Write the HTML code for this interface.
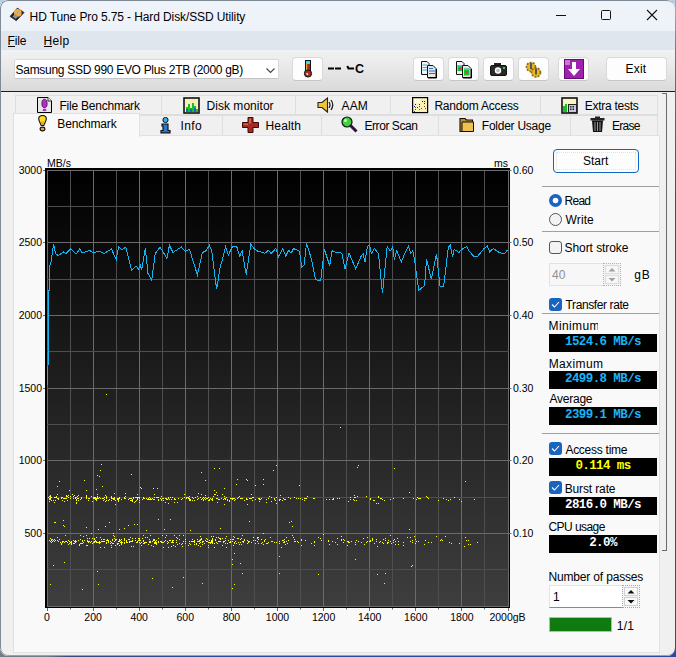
<!DOCTYPE html>
<html><head><meta charset="utf-8">
<style>
html,body{margin:0;padding:0;}
body{width:676px;height:657px;position:relative;overflow:hidden;background:#2d4b9c;z-index:0;font-family:"Liberation Sans",sans-serif;color:#000;}
.win{position:absolute;left:0;top:0;width:675px;height:656px;background:#f0f0f0;border-radius:8px;overflow:hidden;}
.abs{position:absolute;}
.t{position:absolute;white-space:nowrap;line-height:1;font-size:12px;}
.titlebar{position:absolute;left:0;top:0;width:675px;height:31px;background:#eef3fa;}
.menubar{position:absolute;left:0;top:31px;width:675px;height:19px;background:#dfe6ee;}
.toolbar{position:absolute;left:0;top:50px;width:675px;height:41px;background:linear-gradient(#f2f2f2,#e9e9e9 40%,#dadada);}
.blackline{position:absolute;left:0;top:91px;width:675px;height:1px;background:#1c1c1c;}
.btn{position:absolute;background:#fdfdfd;border:1px solid #d9d9d9;border-bottom-color:#c6c6c6;border-radius:4px;box-sizing:border-box;}
.tab{position:absolute;background:#f0f0f0;border:1px solid #dedede;box-sizing:border-box;}
.panel{position:absolute;left:13px;top:135px;width:647px;height:518px;background:#f9f9f9;border:1px solid #e1e1e1;box-sizing:border-box;}
.sep{position:absolute;left:542px;width:117px;height:1px;background:#a0a0a0;}
.lcd{position:absolute;left:549px;width:108px;height:18px;background:#000;font-family:"Liberation Mono",monospace;font-weight:bold;font-size:12.5px;line-height:17px;text-align:center;letter-spacing:-0.6px;}
.chk{position:absolute;left:549px;width:13px;height:13px;box-sizing:border-box;border-radius:3px;background:#1a64c1;}
svg{position:absolute;left:0;top:0;}
.chart{pointer-events:none;}
</style></head><body>
<div class="win">
  <!-- window borders -->
  <div class="titlebar"></div>
  <div class="menubar"></div>
  <div class="toolbar"></div>
  <div class="blackline"></div>

  <!-- title -->
  <svg width="30" height="30" style="left:0;top:0">
    <path d="M10 16.4 L17.4 8.1 L24.1 12.5 L16.3 20.7 Z" fill="#1e1e1e" stroke="#333" stroke-width="0.8"/>
    <circle cx="17.8" cy="12.8" r="3.9" fill="#f2a93a"/>
    <circle cx="17.6" cy="12.6" r="1.2" fill="#9ab0c8"/>
    <path d="M12.5 16.5 L15 14 L18 16.5 L15.8 19 Z" fill="#8d949a"/>
  </svg>
  <div class="t" style="left:29.6px;top:11px;letter-spacing:-0.11px;">HD Tune Pro 5.75 - Hard Disk/SSD Utility</div>
  <!-- caption buttons -->
  <div class="abs" style="left:556px;top:15px;width:10px;height:1px;background:#111;"></div>
  <div class="abs" style="left:601px;top:10px;width:10px;height:10px;border:1px solid #111;border-radius:1.5px;box-sizing:border-box;"></div>
  <svg width="12" height="12" style="left:646px;top:9px"><path d="M1 1 L11 11 M11 1 L1 11" stroke="#111" stroke-width="1.1"/></svg>

  <!-- menu -->
  <div class="t" style="left:7.5px;top:35px;letter-spacing:-0.17px;">File</div>
  <div class="abs" style="left:8px;top:46px;width:7px;height:1px;background:#000;"></div>
  <div class="t" style="left:43.4px;top:35px;letter-spacing:0.4px;">Help</div>
  <div class="abs" style="left:44px;top:46px;width:8px;height:1px;background:#000;"></div>

  <!-- toolbar -->
  <div class="abs" style="left:14px;top:59px;width:265px;height:20px;background:#fff;border:1px solid #d8d8d8;border-bottom-color:#c4c4c4;box-sizing:border-box;border-radius:2px;"></div>
  <div class="t" style="left:15.6px;top:64px;letter-spacing:-0.3px;">Samsung SSD 990 EVO Plus 2TB (2000 gB)</div>
  <svg width="12" height="8" style="left:264.5px;top:66.5px"><path d="M1.5 1.5 L5.5 5.5 L9.5 1.5" fill="none" stroke="#444" stroke-width="1.1"/></svg>

  <div class="btn" style="left:292px;top:57px;width:31px;height:24px;"></div>
  <svg width="14" height="20" style="left:301px;top:59px">
    <rect x="4.5" y="1.5" width="5" height="12" fill="#a82a20" stroke="#111" stroke-width="1"/>
    <rect x="5" y="2" width="4" height="3" fill="#40d8f0"/>
    <rect x="5" y="5" width="1.2" height="8" fill="#f0a040"/>
    <rect x="3" y="11" width="1.3" height="5" fill="#a8e8f8"/>
    <circle cx="7" cy="14.5" r="3.6" fill="#a82a20" stroke="#111" stroke-width="1"/>
    <rect x="5" y="12" width="4" height="2" fill="#a82a20"/>
    <path d="M5.5 14.2 L7 15.8" stroke="#fff4d0" stroke-width="1.3"/>
  </svg>
  <svg width="40" height="20" style="left:326px;top:60px">
    <rect x="2" y="7.5" width="6" height="2" fill="#000"/><rect x="9" y="7.5" width="6" height="2" fill="#000"/>
    <path d="M21.2 6 L22.5 8.5 H28" fill="none" stroke="#000" stroke-width="2"/>
  </svg>
  <div class="t" style="left:355px;top:62.5px;font-size:12.5px;font-weight:bold;">C</div>

  <div class="btn" style="left:413px;top:57px;width:31px;height:24px;"></div>
  <svg width="20" height="20" style="left:419px;top:60px">
    <path d="M2.5 1.5 H8 L10 3.5 V14.5 H2.5 Z" fill="#f4f4f4" stroke="#111"/>
    <path d="M3.5 5H8M3.5 7.5H8M3.5 10H8" stroke="#20b0f0" stroke-width="1.1"/>
    <path d="M8.5 5.5 H14 L17 8.5 V17.5 H8.5 Z" fill="#e8e8e8" stroke="#111"/>
    <path d="M17.5 9 V18 H9" fill="none" stroke="#000" stroke-width="1"/>
    <path d="M10 8.5H14M10 11H16M10 13.5H16" stroke="#2070d0" stroke-width="1.2"/>
  </svg>
  <div class="btn" style="left:448px;top:57px;width:31px;height:24px;"></div>
  <svg width="20" height="20" style="left:454px;top:60px">
    <path d="M2.5 1.5 H8 L10 3.5 V14.5 H2.5 Z" fill="#f4f4f4" stroke="#111"/>
    <rect x="3.5" y="5" width="4.5" height="6" fill="#18c030"/><rect x="3.5" y="5" width="4.5" height="1.5" fill="#30d0f0"/><rect x="5" y="7.5" width="2" height="2" fill="#e04020"/>
    <path d="M8.5 5.5 H14 L17 8.5 V17.5 H8.5 Z" fill="#e8e8e8" stroke="#111"/>
    <path d="M17.5 9 V18 H9" fill="none" stroke="#000" stroke-width="1"/>
    <rect x="10" y="8.5" width="5.5" height="7" fill="#18c030"/><rect x="10" y="8.5" width="5.5" height="1.5" fill="#30d0f0"/><rect x="11.5" y="11" width="2.5" height="2.5" fill="#e04020"/>
  </svg>
  <div class="btn" style="left:483px;top:57px;width:31px;height:24px;"></div>
  <svg width="20" height="20" style="left:489px;top:60px">
    <rect x="5" y="3" width="7" height="3" fill="#222"/>
    <rect x="1.5" y="5.5" width="16" height="10" rx="1.5" fill="#2a2a2a" stroke="#111"/>
    <circle cx="9" cy="10.5" r="3.2" fill="#fff"/><circle cx="9" cy="10.5" r="1.8" fill="#bbb"/>
    <rect x="14" y="7" width="2" height="2" fill="#30d040"/>
  </svg>
  <div class="btn" style="left:518px;top:57px;width:31px;height:24px;"></div>
  <svg width="20" height="20" style="left:524px;top:60px">
    <circle cx="7" cy="7" r="4.5" fill="#e8b820" stroke="#8a6a10" stroke-dasharray="2 1.2" stroke-width="1.6"/>
    <circle cx="12" cy="12.5" r="4.5" fill="#e8b820" stroke="#8a6a10" stroke-dasharray="2 1.2" stroke-width="1.6"/>
    <rect x="6" y="3" width="2" height="6" fill="#555"/><rect x="11" y="8.5" width="2" height="6" fill="#555"/>
  </svg>
  <div class="btn" style="left:558px;top:57px;width:31px;height:24px;"></div>
  <svg width="20" height="20" style="left:564px;top:59px">
    <rect x="0.5" y="0.5" width="19" height="19" fill="#a020b0" stroke="#601070"/>
    <rect x="1" y="1" width="5" height="5" fill="#d070d8"/>
    <path d="M8 3 H12 V10 H16 L10 17 L4 10 H8 Z" fill="#fff"/>
  </svg>
  <div class="btn" style="left:606px;top:57px;width:61px;height:24px;"></div>
  <div class="t" style="left:625.5px;top:63px;letter-spacing:0.2px;">Exit</div>

  <!-- bracket line at right -->
  <div class="abs" style="left:662px;top:93px;width:5px;height:458px;border-top:1px solid #6a6a6a;border-right:1px solid #6a6a6a;border-bottom:1px solid #6a6a6a;box-sizing:border-box;"></div>

  <!-- tabs back row -->
  <div class="tab" style="left:15px;top:95px;width:147px;height:20px;"></div>
  <div class="tab" style="left:161px;top:95px;width:135px;height:20px;"></div>
  <div class="tab" style="left:295px;top:95px;width:96px;height:20px;"></div>
  <div class="tab" style="left:390px;top:95px;width:151px;height:20px;"></div>
  <div class="tab" style="left:540px;top:95px;width:118px;height:20px;"></div>
  <!-- tabs front row -->
  <div class="tab" style="left:139px;top:115px;width:84px;height:21px;"></div>
  <div class="tab" style="left:222px;top:115px;width:100px;height:21px;"></div>
  <div class="tab" style="left:321px;top:115px;width:118px;height:21px;"></div>
  <div class="tab" style="left:438px;top:115px;width:133px;height:21px;"></div>
  <div class="tab" style="left:570px;top:115px;width:88px;height:21px;"></div>
  <div class="panel"></div>
  <div class="tab" style="left:13px;top:113px;width:127px;height:24px;background:#f9f9f9;border-color:#e1e1e1;border-bottom:0;"></div>

  <!-- tab labels -->
  <div class="t" style="left:59.4px;top:100px;letter-spacing:-0.22px;">File Benchmark</div>
  <div class="t" style="left:206.5px;top:100px;letter-spacing:0.04px;">Disk monitor</div>
  <div class="t" style="left:341.6px;top:100px;letter-spacing:0.05px;">AAM</div>
  <div class="t" style="left:434.4px;top:100px;letter-spacing:-0.2px;">Random Access</div>
  <div class="t" style="left:584.7px;top:100px;letter-spacing:-0.25px;">Extra tests</div>
  <div class="t" style="left:57.3px;top:118px;letter-spacing:-0.16px;">Benchmark</div>
  <div class="t" style="left:180.6px;top:120px;letter-spacing:0.37px;">Info</div>
  <div class="t" style="left:265.5px;top:120px;letter-spacing:0.16px;">Health</div>
  <div class="t" style="left:364.5px;top:120px;letter-spacing:-0.44px;">Error Scan</div>
  <div class="t" style="left:481.8px;top:120px;letter-spacing:-0.25px;">Folder Usage</div>
  <div class="t" style="left:612px;top:120px;letter-spacing:-0.75px;">Erase</div>

  <!-- tab icons -->
  <svg width="16" height="17" style="left:37px;top:97px">
    <path d="M0.5 0.5 H11 L14.5 4 V15.5 H0.5 Z" fill="#e8e8e8" stroke="#000"/>
    <path d="M11 0.5 V4 H14.5" fill="#fff" stroke="#000" stroke-width="0.8"/>
    <ellipse cx="7.5" cy="6.5" rx="2.6" ry="4.3" fill="#b030c0" stroke="#400050" stroke-width="0.8"/>
    <ellipse cx="7.5" cy="13" rx="2" ry="1.2" fill="#b030c0"/>
  </svg>
  <svg width="18" height="17" style="left:183px;top:97px">
    <rect x="1" y="1" width="15" height="15" fill="#f4f0b8" stroke="#111" stroke-width="1.6"/>
    <path d="M3 15V10h2v5zM5 15V7h2v8zM7 15V11h2v4zM9 15V6h2v9zM11 15V9h2v6zM13 15V12h2v3z" fill="#18c028"/>
    <path d="M3 15V12h2v3zM7 15V12h2v3zM11 15V11h2v4z" fill="#2060d0"/>
  </svg>
  <svg width="18" height="17" style="left:317px;top:97px">
    <path d="M1 5.5 H5 L10.5 1 V15 L5 10.5 H1 Z" fill="#f4c430" stroke="#222" stroke-width="1.1"/>
    <path d="M12 5 Q14 8 12 11 M14 3 Q17.5 8 14 13" fill="none" stroke="#222" stroke-width="1.3"/>
  </svg>
  <svg width="17" height="17" style="left:412px;top:97px">
    <rect x="0.6" y="0.6" width="15" height="15" fill="#f8f2b8" stroke="#000" stroke-width="1.2"/>
    <rect x="2" y="2" width="6" height="4" fill="#fcfae8"/>
    <path d="M10 4h1v1h-1zM12 4h1v1h-1zM12 6h1v1h-1zM3 7h1v1h-1zM7 7h1v1h-1zM2 9h1v1h-1zM5 10h1v1h-1z" fill="#2a10a0"/>
    <path d="M3 10h1v1h-1zM7 9h1v1h-1zM12 9h1v1h-1zM3 12h1v1h-1zM7 12h1v1h-1zM9 11h1v1h-1zM13 11h1v1h-1zM2 14h1v1h-1z" fill="#b02828"/>
  </svg>
  <svg width="17" height="17" style="left:561px;top:97px">
    <rect x="1" y="1" width="15" height="15" fill="#f8f4c8" stroke="#111" stroke-width="1.6"/>
    <path d="M2 15V9h2v6zM4 15V7h2v8z" fill="#18c028"/>
    <rect x="7.5" y="7.5" width="8" height="8" fill="#c8c8d8" stroke="#222"/>
    <path d="M9 9h1.5v1.5h-1.5zM11.5 9h1.5v1.5h-1.5zM9 11.5h1.5v1.5h-1.5zM11.5 11.5h1.5v1.5h-1.5z" fill="#223"/>
  </svg>
  <svg width="10" height="17" style="left:38px;top:115px">
    <path d="M4.5 0.5 C7 0.5 8.3 1.8 8.3 3.8 C8.3 6 6.5 8.5 5.8 10.5 H3.2 C2.5 8.5 0.7 6 0.7 3.8 C0.7 1.8 2 0.5 4.5 0.5 Z" fill="#f6e020" stroke="#111" stroke-width="1.1"/>
    <path d="M2.2 6.5 C3 8 3.4 9 3.6 10 H5.4 C5.6 9 6 8 6.8 6.5 Z" fill="#f0a040"/>
    <ellipse cx="4.5" cy="14" rx="2.4" ry="1.9" fill="#f0a040" stroke="#111" stroke-width="1.1"/>
  </svg>
  <svg width="12" height="17" style="left:160px;top:117px">
    <circle cx="5.5" cy="3" r="2.6" fill="#38b0f0" stroke="#111"/>
    <path d="M2 7 H8 V13.5 H10 V15.8 H1 V13.5 H3 V9 H2 Z" fill="#2a78d0" stroke="#111" stroke-width="1.2"/>
  </svg>
  <svg width="18" height="17" style="left:242px;top:117px">
    <path d="M6 0.5 H11 V5.5 H16.5 V10.5 H11 V15.5 H6 V10.5 H0.5 V5.5 H6 Z" fill="#a82a22" stroke="#3a0a08" stroke-width="1"/>
    <path d="M7 1.5 H9 V6.5 H7 Z M1.5 6.5 H6 V8 H1.5 Z" fill="#d86050"/>
  </svg>
  <svg width="18" height="17" style="left:341px;top:116px">
    <circle cx="6" cy="6" r="5" fill="#40d040" stroke="#111" stroke-width="1.2"/>
    <circle cx="4.5" cy="4.5" r="1.5" fill="#c0ffc0"/>
    <path d="M9.5 9.5 L15.5 15.5" stroke="#301040" stroke-width="3"/>
  </svg>
  <svg width="16" height="17" style="left:459px;top:116px">
    <path d="M1 2.5 H6 L7.5 4 H13.5 V15.5 H1 Z" fill="#c88a20" stroke="#111" stroke-width="1.1"/>
    <path d="M3 6 H14.5 V15.5 H3 Z" fill="#f0c050" stroke="#111" stroke-width="1"/>
  </svg>
  <svg width="16" height="17" style="left:590px;top:116px">
    <rect x="0.5" y="2" width="14" height="2.5" fill="#222"/>
    <rect x="5" y="0.5" width="5" height="2" fill="#222"/>
    <path d="M2 4.5 H13 L12 16 H3 Z" fill="#111"/>
    <path d="M5 6V15M7.5 6V15M10 6V15" stroke="#9a9a9a" stroke-width="1"/>
  </svg>

  <!-- chart -->
<svg class="chart" width="676" height="657" viewBox="0 0 676 657">
<defs><linearGradient id="cg" x1="0" y1="0" x2="0" y2="1">
<stop offset="0" stop-color="#000"/><stop offset="1" stop-color="#3e3e3e"/></linearGradient></defs>
<rect x="45" y="168" width="465" height="440" fill="#000"/>
<rect x="47" y="170" width="462" height="436" fill="url(#cg)"/>
<line x1="47.5" y1="170" x2="47.5" y2="606" stroke="#6b6b6b" stroke-width="1"/><line x1="70.5" y1="170" x2="70.5" y2="606" stroke="#4e4e4e" stroke-width="1"/><line x1="93.5" y1="170" x2="93.5" y2="606" stroke="#6b6b6b" stroke-width="1"/><line x1="116.5" y1="170" x2="116.5" y2="606" stroke="#4e4e4e" stroke-width="1"/><line x1="139.5" y1="170" x2="139.5" y2="606" stroke="#6b6b6b" stroke-width="1"/><line x1="162.5" y1="170" x2="162.5" y2="606" stroke="#4e4e4e" stroke-width="1"/><line x1="185.5" y1="170" x2="185.5" y2="606" stroke="#6b6b6b" stroke-width="1"/><line x1="208.5" y1="170" x2="208.5" y2="606" stroke="#4e4e4e" stroke-width="1"/><line x1="231.5" y1="170" x2="231.5" y2="606" stroke="#6b6b6b" stroke-width="1"/><line x1="254.5" y1="170" x2="254.5" y2="606" stroke="#4e4e4e" stroke-width="1"/><line x1="277.5" y1="170" x2="277.5" y2="606" stroke="#6b6b6b" stroke-width="1"/><line x1="300.5" y1="170" x2="300.5" y2="606" stroke="#4e4e4e" stroke-width="1"/><line x1="323.5" y1="170" x2="323.5" y2="606" stroke="#6b6b6b" stroke-width="1"/><line x1="346.5" y1="170" x2="346.5" y2="606" stroke="#4e4e4e" stroke-width="1"/><line x1="369.5" y1="170" x2="369.5" y2="606" stroke="#6b6b6b" stroke-width="1"/><line x1="392.5" y1="170" x2="392.5" y2="606" stroke="#4e4e4e" stroke-width="1"/><line x1="415.5" y1="170" x2="415.5" y2="606" stroke="#6b6b6b" stroke-width="1"/><line x1="438.5" y1="170" x2="438.5" y2="606" stroke="#4e4e4e" stroke-width="1"/><line x1="461.5" y1="170" x2="461.5" y2="606" stroke="#6b6b6b" stroke-width="1"/><line x1="484.5" y1="170" x2="484.5" y2="606" stroke="#4e4e4e" stroke-width="1"/><line x1="508.5" y1="170" x2="508.5" y2="606" stroke="#6b6b6b" stroke-width="1"/><line x1="47" y1="606.5" x2="509" y2="606.5" stroke="#6b6b6b" stroke-width="1"/><line x1="47" y1="569.5" x2="509" y2="569.5" stroke="#4e4e4e" stroke-width="1"/><line x1="47" y1="533.5" x2="509" y2="533.5" stroke="#6b6b6b" stroke-width="1"/><line x1="47" y1="497.5" x2="509" y2="497.5" stroke="#4e4e4e" stroke-width="1"/><line x1="47" y1="460.5" x2="509" y2="460.5" stroke="#6b6b6b" stroke-width="1"/><line x1="47" y1="424.5" x2="509" y2="424.5" stroke="#4e4e4e" stroke-width="1"/><line x1="47" y1="388.5" x2="509" y2="388.5" stroke="#6b6b6b" stroke-width="1"/><line x1="47" y1="351.5" x2="509" y2="351.5" stroke="#4e4e4e" stroke-width="1"/><line x1="47" y1="315.5" x2="509" y2="315.5" stroke="#6b6b6b" stroke-width="1"/><line x1="47" y1="279.5" x2="509" y2="279.5" stroke="#4e4e4e" stroke-width="1"/><line x1="47" y1="242.5" x2="509" y2="242.5" stroke="#6b6b6b" stroke-width="1"/><line x1="47" y1="206.5" x2="509" y2="206.5" stroke="#4e4e4e" stroke-width="1"/><line x1="47" y1="170.5" x2="509" y2="170.5" stroke="#6b6b6b" stroke-width="1"/>
<line x1="47.5" y1="608" x2="47.5" y2="611" stroke="#6b6b6b"/><line x1="70.5" y1="608" x2="70.5" y2="609.5" stroke="#6b6b6b"/><line x1="93.5" y1="608" x2="93.5" y2="611" stroke="#6b6b6b"/><line x1="116.5" y1="608" x2="116.5" y2="609.5" stroke="#6b6b6b"/><line x1="139.5" y1="608" x2="139.5" y2="611" stroke="#6b6b6b"/><line x1="162.5" y1="608" x2="162.5" y2="609.5" stroke="#6b6b6b"/><line x1="185.5" y1="608" x2="185.5" y2="611" stroke="#6b6b6b"/><line x1="208.5" y1="608" x2="208.5" y2="609.5" stroke="#6b6b6b"/><line x1="231.5" y1="608" x2="231.5" y2="611" stroke="#6b6b6b"/><line x1="254.5" y1="608" x2="254.5" y2="609.5" stroke="#6b6b6b"/><line x1="277.5" y1="608" x2="277.5" y2="611" stroke="#6b6b6b"/><line x1="300.5" y1="608" x2="300.5" y2="609.5" stroke="#6b6b6b"/><line x1="323.5" y1="608" x2="323.5" y2="611" stroke="#6b6b6b"/><line x1="346.5" y1="608" x2="346.5" y2="609.5" stroke="#6b6b6b"/><line x1="369.5" y1="608" x2="369.5" y2="611" stroke="#6b6b6b"/><line x1="392.5" y1="608" x2="392.5" y2="609.5" stroke="#6b6b6b"/><line x1="415.5" y1="608" x2="415.5" y2="611" stroke="#6b6b6b"/><line x1="438.5" y1="608" x2="438.5" y2="609.5" stroke="#6b6b6b"/><line x1="461.5" y1="608" x2="461.5" y2="611" stroke="#6b6b6b"/><line x1="484.5" y1="608" x2="484.5" y2="609.5" stroke="#6b6b6b"/><line x1="508.5" y1="608" x2="508.5" y2="611" stroke="#6b6b6b"/><line x1="43" y1="533.5" x2="45" y2="533.5" stroke="#6b6b6b"/><line x1="509" y1="533.5" x2="511.5" y2="533.5" stroke="#6b6b6b"/><line x1="43" y1="460.5" x2="45" y2="460.5" stroke="#6b6b6b"/><line x1="509" y1="460.5" x2="511.5" y2="460.5" stroke="#6b6b6b"/><line x1="43" y1="388.5" x2="45" y2="388.5" stroke="#6b6b6b"/><line x1="509" y1="388.5" x2="511.5" y2="388.5" stroke="#6b6b6b"/><line x1="43" y1="315.5" x2="45" y2="315.5" stroke="#6b6b6b"/><line x1="509" y1="315.5" x2="511.5" y2="315.5" stroke="#6b6b6b"/><line x1="43" y1="242.5" x2="45" y2="242.5" stroke="#6b6b6b"/><line x1="509" y1="242.5" x2="511.5" y2="242.5" stroke="#6b6b6b"/><line x1="43" y1="170.5" x2="45" y2="170.5" stroke="#6b6b6b"/><line x1="509" y1="170.5" x2="511.5" y2="170.5" stroke="#6b6b6b"/>
<path d="M48 497h1v1h-1zM49 496h1v1h-1zM49 498h1v1h-1zM49 499h1v1h-1zM49 501h1v1h-1zM49 540h1v1h-1zM50 495h1v1h-1zM50 496h1v1h-1zM50 497h1v1h-1zM50 498h1v1h-1zM50 499h1v1h-1zM50 538h1v1h-1zM50 541h1v1h-1zM50 584h1v1h-1zM51 497h1v1h-1zM51 500h1v1h-1zM51 539h1v1h-1zM51 540h1v1h-1zM51 542h1v1h-1zM52 539h1v1h-1zM52 541h1v1h-1zM53 500h1v1h-1zM53 540h1v1h-1zM53 565h1v1h-1zM54 497h1v1h-1zM54 502h1v1h-1zM54 522h1v1h-1zM54 539h1v1h-1zM54 541h1v1h-1zM55 497h1v1h-1zM55 500h1v1h-1zM55 522h1v1h-1zM55 540h1v1h-1zM56 496h1v1h-1zM56 497h1v1h-1zM57 486h1v1h-1zM57 494h1v1h-1zM57 498h1v1h-1zM57 537h1v1h-1zM57 540h1v1h-1zM58 498h1v1h-1zM58 499h1v1h-1zM58 541h1v1h-1zM59 481h1v1h-1zM59 539h1v1h-1zM60 542h1v1h-1zM61 497h1v1h-1zM61 498h1v1h-1zM61 543h1v1h-1zM61 544h1v1h-1zM62 497h1v1h-1zM62 500h1v1h-1zM62 541h1v1h-1zM62 542h1v1h-1zM63 498h1v1h-1zM63 520h1v1h-1zM63 525h1v1h-1zM63 541h1v1h-1zM64 498h1v1h-1zM64 501h1v1h-1zM64 526h1v1h-1zM64 542h1v1h-1zM64 562h1v1h-1zM65 498h1v1h-1zM65 535h1v1h-1zM65 541h1v1h-1zM66 495h1v1h-1zM66 496h1v1h-1zM66 498h1v1h-1zM66 541h1v1h-1zM67 496h1v1h-1zM67 500h1v1h-1zM67 542h1v1h-1zM68 495h1v1h-1zM68 497h1v1h-1zM68 540h1v1h-1zM68 544h1v1h-1zM69 490h1v1h-1zM69 541h1v1h-1zM69 543h1v1h-1zM70 496h1v1h-1zM70 498h1v1h-1zM70 542h1v1h-1zM71 541h1v1h-1zM71 542h1v1h-1zM71 543h1v1h-1zM71 544h1v1h-1zM72 494h1v1h-1zM73 496h1v1h-1zM73 498h1v1h-1zM73 540h1v1h-1zM73 543h1v1h-1zM74 495h1v1h-1zM74 541h1v1h-1zM74 543h1v1h-1zM75 497h1v1h-1zM75 498h1v1h-1zM75 540h1v1h-1zM75 541h1v1h-1zM75 542h1v1h-1zM76 497h1v1h-1zM76 499h1v1h-1zM76 500h1v1h-1zM76 502h1v1h-1zM76 503h1v1h-1zM76 541h1v1h-1zM77 496h1v1h-1zM77 498h1v1h-1zM78 495h1v1h-1zM78 498h1v1h-1zM78 500h1v1h-1zM78 540h1v1h-1zM79 544h1v1h-1zM79 545h1v1h-1zM80 499h1v1h-1zM80 535h1v1h-1zM80 539h1v1h-1zM80 543h1v1h-1zM81 497h1v1h-1zM81 498h1v1h-1zM81 543h1v1h-1zM82 540h1v1h-1zM82 541h1v1h-1zM82 543h1v1h-1zM82 589h1v1h-1zM83 536h1v1h-1zM83 542h1v1h-1zM84 480h1v1h-1zM84 540h1v1h-1zM86 490h1v1h-1zM86 495h1v1h-1zM86 496h1v1h-1zM86 497h1v1h-1zM86 498h1v1h-1zM86 527h1v1h-1zM86 535h1v1h-1zM86 545h1v1h-1zM87 538h1v1h-1zM87 540h1v1h-1zM87 541h1v1h-1zM87 545h1v1h-1zM88 498h1v1h-1zM88 500h1v1h-1zM88 541h1v1h-1zM88 542h1v1h-1zM89 498h1v1h-1zM89 538h1v1h-1zM89 541h1v1h-1zM90 542h1v1h-1zM91 496h1v1h-1zM91 533h1v1h-1zM91 541h1v1h-1zM92 501h1v1h-1zM92 538h1v1h-1zM92 543h1v1h-1zM93 497h1v1h-1zM93 498h1v1h-1zM93 542h1v1h-1zM94 497h1v1h-1zM94 498h1v1h-1zM94 538h1v1h-1zM94 539h1v1h-1zM94 541h1v1h-1zM94 542h1v1h-1zM95 497h1v1h-1zM95 498h1v1h-1zM95 499h1v1h-1zM95 540h1v1h-1zM95 541h1v1h-1zM96 489h1v1h-1zM96 498h1v1h-1zM96 499h1v1h-1zM96 500h1v1h-1zM96 537h1v1h-1zM96 541h1v1h-1zM96 542h1v1h-1zM97 475h1v1h-1zM97 494h1v1h-1zM97 496h1v1h-1zM97 497h1v1h-1zM97 498h1v1h-1zM97 542h1v1h-1zM97 571h1v1h-1zM98 498h1v1h-1zM98 529h1v1h-1zM98 542h1v1h-1zM98 584h1v1h-1zM99 476h1v1h-1zM99 497h1v1h-1zM99 541h1v1h-1zM99 542h1v1h-1zM99 543h1v1h-1zM100 470h1v1h-1zM100 498h1v1h-1zM100 537h1v1h-1zM100 542h1v1h-1zM100 547h1v1h-1zM101 464h1v1h-1zM101 539h1v1h-1zM101 541h1v1h-1zM102 486h1v1h-1zM102 498h1v1h-1zM102 541h1v1h-1zM103 498h1v1h-1zM103 500h1v1h-1zM103 539h1v1h-1zM103 541h1v1h-1zM104 497h1v1h-1zM104 499h1v1h-1zM104 539h1v1h-1zM104 541h1v1h-1zM104 547h1v1h-1zM105 495h1v1h-1zM105 501h1v1h-1zM105 526h1v1h-1zM106 394h1v1h-1zM106 496h1v1h-1zM106 497h1v1h-1zM106 498h1v1h-1zM106 500h1v1h-1zM106 540h1v1h-1zM106 542h1v1h-1zM106 543h1v1h-1zM107 539h1v1h-1zM107 540h1v1h-1zM108 500h1v1h-1zM108 540h1v1h-1zM108 541h1v1h-1zM108 542h1v1h-1zM109 499h1v1h-1zM109 522h1v1h-1zM110 541h1v1h-1zM110 543h1v1h-1zM111 496h1v1h-1zM111 497h1v1h-1zM111 498h1v1h-1zM111 500h1v1h-1zM111 542h1v1h-1zM111 545h1v1h-1zM111 547h1v1h-1zM112 498h1v1h-1zM112 539h1v1h-1zM112 540h1v1h-1zM112 543h1v1h-1zM113 498h1v1h-1zM113 499h1v1h-1zM113 533h1v1h-1zM113 535h1v1h-1zM113 543h1v1h-1zM114 493h1v1h-1zM114 497h1v1h-1zM114 498h1v1h-1zM114 499h1v1h-1zM114 536h1v1h-1zM114 538h1v1h-1zM114 541h1v1h-1zM115 500h1v1h-1zM115 504h1v1h-1zM115 539h1v1h-1zM115 540h1v1h-1zM115 545h1v1h-1zM116 539h1v1h-1zM117 498h1v1h-1zM117 499h1v1h-1zM117 543h1v1h-1zM117 544h1v1h-1zM118 498h1v1h-1zM118 499h1v1h-1zM118 500h1v1h-1zM118 501h1v1h-1zM118 541h1v1h-1zM118 543h1v1h-1zM119 497h1v1h-1zM119 498h1v1h-1zM119 529h1v1h-1zM119 539h1v1h-1zM119 540h1v1h-1zM119 541h1v1h-1zM119 545h1v1h-1zM120 540h1v1h-1zM120 542h1v1h-1zM121 499h1v1h-1zM121 539h1v1h-1zM121 541h1v1h-1zM121 542h1v1h-1zM121 543h1v1h-1zM121 544h1v1h-1zM122 542h1v1h-1zM124 497h1v1h-1zM124 498h1v1h-1zM124 528h1v1h-1zM124 538h1v1h-1zM124 539h1v1h-1zM124 540h1v1h-1zM124 542h1v1h-1zM124 543h1v1h-1zM125 493h1v1h-1zM125 496h1v1h-1zM125 498h1v1h-1zM126 540h1v1h-1zM126 541h1v1h-1zM126 542h1v1h-1zM127 542h1v1h-1zM128 499h1v1h-1zM128 525h1v1h-1zM128 539h1v1h-1zM129 498h1v1h-1zM129 539h1v1h-1zM129 541h1v1h-1zM129 542h1v1h-1zM130 498h1v1h-1zM130 500h1v1h-1zM130 537h1v1h-1zM130 541h1v1h-1zM131 474h1v1h-1zM131 498h1v1h-1zM131 500h1v1h-1zM131 541h1v1h-1zM131 546h1v1h-1zM132 499h1v1h-1zM132 500h1v1h-1zM132 501h1v1h-1zM132 538h1v1h-1zM132 540h1v1h-1zM132 541h1v1h-1zM133 497h1v1h-1zM133 498h1v1h-1zM133 546h1v1h-1zM134 502h1v1h-1zM134 524h1v1h-1zM135 497h1v1h-1zM135 501h1v1h-1zM135 538h1v1h-1zM135 540h1v1h-1zM136 497h1v1h-1zM136 500h1v1h-1zM136 542h1v1h-1zM137 494h1v1h-1zM137 497h1v1h-1zM137 498h1v1h-1zM137 499h1v1h-1zM137 524h1v1h-1zM137 541h1v1h-1zM137 542h1v1h-1zM138 497h1v1h-1zM138 538h1v1h-1zM138 540h1v1h-1zM139 497h1v1h-1zM139 498h1v1h-1zM139 500h1v1h-1zM139 502h1v1h-1zM139 538h1v1h-1zM139 539h1v1h-1zM139 540h1v1h-1zM139 542h1v1h-1zM140 487h1v1h-1zM140 540h1v1h-1zM140 543h1v1h-1zM141 488h1v1h-1zM141 542h1v1h-1zM141 545h1v1h-1zM142 499h1v1h-1zM142 538h1v1h-1zM143 497h1v1h-1zM143 498h1v1h-1zM143 535h1v1h-1zM143 540h1v1h-1zM143 541h1v1h-1zM143 543h1v1h-1zM144 498h1v1h-1zM144 542h1v1h-1zM144 543h1v1h-1zM145 537h1v1h-1zM145 542h1v1h-1zM146 498h1v1h-1zM146 530h1v1h-1zM146 542h1v1h-1zM147 499h1v1h-1zM147 537h1v1h-1zM148 498h1v1h-1zM148 499h1v1h-1zM148 544h1v1h-1zM149 497h1v1h-1zM149 499h1v1h-1zM149 539h1v1h-1zM149 541h1v1h-1zM149 542h1v1h-1zM150 498h1v1h-1zM150 499h1v1h-1zM150 535h1v1h-1zM150 541h1v1h-1zM150 542h1v1h-1zM151 499h1v1h-1zM151 545h1v1h-1zM152 498h1v1h-1zM152 541h1v1h-1zM152 578h1v1h-1zM153 488h1v1h-1zM153 499h1v1h-1zM153 539h1v1h-1zM153 540h1v1h-1zM153 546h1v1h-1zM154 494h1v1h-1zM154 497h1v1h-1zM154 499h1v1h-1zM154 539h1v1h-1zM154 540h1v1h-1zM154 542h1v1h-1zM154 543h1v1h-1zM155 541h1v1h-1zM155 542h1v1h-1zM155 543h1v1h-1zM156 497h1v1h-1zM156 540h1v1h-1zM156 542h1v1h-1zM156 543h1v1h-1zM156 544h1v1h-1zM157 488h1v1h-1zM157 497h1v1h-1zM158 497h1v1h-1zM158 499h1v1h-1zM158 500h1v1h-1zM158 519h1v1h-1zM158 538h1v1h-1zM158 541h1v1h-1zM158 542h1v1h-1zM160 498h1v1h-1zM160 541h1v1h-1zM161 496h1v1h-1zM161 499h1v1h-1zM161 500h1v1h-1zM161 541h1v1h-1zM161 542h1v1h-1zM162 498h1v1h-1zM162 535h1v1h-1zM162 542h1v1h-1zM163 498h1v1h-1zM163 500h1v1h-1zM163 542h1v1h-1zM163 547h1v1h-1zM164 529h1v1h-1zM164 541h1v1h-1zM165 498h1v1h-1zM165 502h1v1h-1zM165 537h1v1h-1zM165 540h1v1h-1zM166 498h1v1h-1zM166 499h1v1h-1zM166 535h1v1h-1zM167 499h1v1h-1zM167 541h1v1h-1zM167 543h1v1h-1zM168 497h1v1h-1zM168 498h1v1h-1zM168 503h1v1h-1zM168 542h1v1h-1zM168 547h1v1h-1zM169 499h1v1h-1zM169 540h1v1h-1zM170 497h1v1h-1zM170 519h1v1h-1zM170 540h1v1h-1zM171 499h1v1h-1zM171 542h1v1h-1zM171 546h1v1h-1zM172 497h1v1h-1zM172 540h1v1h-1zM172 541h1v1h-1zM172 542h1v1h-1zM172 587h1v1h-1zM173 540h1v1h-1zM173 542h1v1h-1zM173 545h1v1h-1zM174 498h1v1h-1zM174 499h1v1h-1zM174 502h1v1h-1zM174 535h1v1h-1zM175 499h1v1h-1zM175 546h1v1h-1zM176 537h1v1h-1zM176 540h1v1h-1zM176 542h1v1h-1zM177 502h1v1h-1zM177 538h1v1h-1zM177 544h1v1h-1zM178 498h1v1h-1zM179 535h1v1h-1zM179 539h1v1h-1zM179 543h1v1h-1zM181 499h1v1h-1zM181 544h1v1h-1zM182 498h1v1h-1zM182 543h1v1h-1zM182 546h1v1h-1zM183 535h1v1h-1zM183 541h1v1h-1zM183 577h1v1h-1zM184 494h1v1h-1zM184 497h1v1h-1zM185 539h1v1h-1zM185 541h1v1h-1zM185 543h1v1h-1zM186 497h1v1h-1zM186 498h1v1h-1zM187 497h1v1h-1zM188 497h1v1h-1zM188 498h1v1h-1zM188 545h1v1h-1zM189 496h1v1h-1zM189 498h1v1h-1zM189 499h1v1h-1zM189 500h1v1h-1zM189 541h1v1h-1zM189 543h1v1h-1zM190 499h1v1h-1zM190 500h1v1h-1zM190 530h1v1h-1zM190 544h1v1h-1zM191 541h1v1h-1zM192 497h1v1h-1zM192 500h1v1h-1zM192 539h1v1h-1zM192 541h1v1h-1zM193 498h1v1h-1zM193 541h1v1h-1zM194 500h1v1h-1zM194 540h1v1h-1zM194 541h1v1h-1zM194 542h1v1h-1zM194 544h1v1h-1zM195 497h1v1h-1zM196 543h1v1h-1zM196 544h1v1h-1zM197 496h1v1h-1zM197 499h1v1h-1zM197 539h1v1h-1zM197 541h1v1h-1zM198 493h1v1h-1zM198 498h1v1h-1zM198 541h1v1h-1zM198 545h1v1h-1zM199 540h1v1h-1zM199 541h1v1h-1zM199 543h1v1h-1zM200 497h1v1h-1zM200 536h1v1h-1zM200 539h1v1h-1zM200 540h1v1h-1zM200 542h1v1h-1zM200 546h1v1h-1zM201 472h1v1h-1zM201 494h1v1h-1zM201 499h1v1h-1zM201 538h1v1h-1zM201 539h1v1h-1zM202 498h1v1h-1zM202 541h1v1h-1zM202 542h1v1h-1zM202 544h1v1h-1zM202 583h1v1h-1zM203 497h1v1h-1zM203 499h1v1h-1zM203 500h1v1h-1zM203 541h1v1h-1zM204 498h1v1h-1zM204 543h1v1h-1zM205 480h1v1h-1zM205 495h1v1h-1zM205 497h1v1h-1zM205 499h1v1h-1zM205 540h1v1h-1zM206 498h1v1h-1zM206 538h1v1h-1zM206 541h1v1h-1zM207 498h1v1h-1zM207 539h1v1h-1zM207 541h1v1h-1zM208 497h1v1h-1zM208 500h1v1h-1zM208 542h1v1h-1zM208 545h1v1h-1zM208 547h1v1h-1zM209 499h1v1h-1zM209 500h1v1h-1zM209 540h1v1h-1zM209 542h1v1h-1zM210 498h1v1h-1zM210 542h1v1h-1zM210 543h1v1h-1zM211 499h1v1h-1zM211 536h1v1h-1zM211 540h1v1h-1zM211 541h1v1h-1zM211 542h1v1h-1zM212 498h1v1h-1zM212 499h1v1h-1zM212 500h1v1h-1zM212 538h1v1h-1zM212 539h1v1h-1zM212 540h1v1h-1zM212 541h1v1h-1zM212 542h1v1h-1zM212 543h1v1h-1zM213 496h1v1h-1zM213 536h1v1h-1zM214 468h1v1h-1zM214 490h1v1h-1zM214 494h1v1h-1zM214 543h1v1h-1zM214 547h1v1h-1zM215 494h1v1h-1zM215 539h1v1h-1zM215 540h1v1h-1zM216 492h1v1h-1zM216 498h1v1h-1zM216 537h1v1h-1zM216 542h1v1h-1zM217 495h1v1h-1zM217 498h1v1h-1zM217 502h1v1h-1zM217 543h1v1h-1zM218 499h1v1h-1zM218 537h1v1h-1zM218 541h1v1h-1zM219 468h1v1h-1zM219 499h1v1h-1zM219 538h1v1h-1zM219 541h1v1h-1zM220 528h1v1h-1zM220 538h1v1h-1zM220 539h1v1h-1zM220 541h1v1h-1zM221 498h1v1h-1zM222 494h1v1h-1zM222 538h1v1h-1zM222 545h1v1h-1zM223 499h1v1h-1zM223 541h1v1h-1zM223 542h1v1h-1zM224 488h1v1h-1zM224 496h1v1h-1zM224 498h1v1h-1zM224 504h1v1h-1zM224 541h1v1h-1zM225 498h1v1h-1zM225 499h1v1h-1zM225 538h1v1h-1zM225 540h1v1h-1zM225 543h1v1h-1zM226 497h1v1h-1zM226 536h1v1h-1zM226 547h1v1h-1zM227 499h1v1h-1zM227 500h1v1h-1zM227 543h1v1h-1zM228 540h1v1h-1zM229 500h1v1h-1zM229 501h1v1h-1zM229 542h1v1h-1zM230 498h1v1h-1zM230 539h1v1h-1zM230 541h1v1h-1zM230 542h1v1h-1zM231 498h1v1h-1zM232 498h1v1h-1zM232 499h1v1h-1zM232 539h1v1h-1zM232 541h1v1h-1zM232 559h1v1h-1zM232 564h1v1h-1zM232 588h1v1h-1zM233 498h1v1h-1zM233 536h1v1h-1zM233 539h1v1h-1zM233 545h1v1h-1zM234 498h1v1h-1zM234 500h1v1h-1zM234 537h1v1h-1zM234 542h1v1h-1zM234 543h1v1h-1zM234 553h1v1h-1zM234 584h1v1h-1zM235 499h1v1h-1zM235 541h1v1h-1zM236 484h1v1h-1zM236 543h1v1h-1zM237 479h1v1h-1zM237 498h1v1h-1zM237 538h1v1h-1zM238 497h1v1h-1zM238 538h1v1h-1zM238 542h1v1h-1zM239 496h1v1h-1zM239 544h1v1h-1zM240 498h1v1h-1zM240 539h1v1h-1zM240 542h1v1h-1zM240 563h1v1h-1zM241 498h1v1h-1zM241 538h1v1h-1zM241 544h1v1h-1zM242 498h1v1h-1zM242 535h1v1h-1zM242 541h1v1h-1zM242 573h1v1h-1zM243 541h1v1h-1zM243 542h1v1h-1zM244 500h1v1h-1zM244 539h1v1h-1zM244 540h1v1h-1zM246 479h1v1h-1zM246 498h1v1h-1zM246 499h1v1h-1zM247 480h1v1h-1zM247 499h1v1h-1zM247 504h1v1h-1zM247 540h1v1h-1zM247 543h1v1h-1zM248 541h1v1h-1zM248 542h1v1h-1zM249 498h1v1h-1zM249 521h1v1h-1zM249 541h1v1h-1zM250 498h1v1h-1zM251 494h1v1h-1zM251 498h1v1h-1zM251 542h1v1h-1zM252 497h1v1h-1zM252 500h1v1h-1zM253 497h1v1h-1zM253 537h1v1h-1zM253 540h1v1h-1zM255 485h1v1h-1zM255 499h1v1h-1zM255 540h1v1h-1zM255 543h1v1h-1zM257 537h1v1h-1zM257 538h1v1h-1zM257 541h1v1h-1zM258 498h1v1h-1zM258 537h1v1h-1zM258 539h1v1h-1zM258 543h1v1h-1zM259 498h1v1h-1zM259 499h1v1h-1zM259 501h1v1h-1zM260 499h1v1h-1zM261 498h1v1h-1zM261 539h1v1h-1zM261 543h1v1h-1zM262 542h1v1h-1zM263 479h1v1h-1zM263 484h1v1h-1zM263 533h1v1h-1zM263 544h1v1h-1zM264 540h1v1h-1zM264 541h1v1h-1zM265 539h1v1h-1zM266 499h1v1h-1zM266 502h1v1h-1zM266 543h1v1h-1zM267 543h1v1h-1zM268 498h1v1h-1zM268 542h1v1h-1zM269 496h1v1h-1zM270 537h1v1h-1zM271 497h1v1h-1zM271 501h1v1h-1zM271 541h1v1h-1zM272 541h1v1h-1zM273 470h1v1h-1zM274 498h1v1h-1zM274 499h1v1h-1zM274 542h1v1h-1zM275 500h1v1h-1zM276 465h1v1h-1zM276 497h1v1h-1zM276 503h1v1h-1zM276 542h1v1h-1zM279 499h1v1h-1zM279 500h1v1h-1zM279 541h1v1h-1zM279 543h1v1h-1zM279 556h1v1h-1zM279 573h1v1h-1zM280 495h1v1h-1zM280 499h1v1h-1zM281 547h1v1h-1zM282 500h1v1h-1zM282 540h1v1h-1zM283 498h1v1h-1zM283 540h1v1h-1zM283 542h1v1h-1zM284 499h1v1h-1zM284 539h1v1h-1zM284 541h1v1h-1zM284 542h1v1h-1zM285 499h1v1h-1zM285 544h1v1h-1zM286 537h1v1h-1zM286 541h1v1h-1zM287 543h1v1h-1zM288 497h1v1h-1zM288 540h1v1h-1zM289 522h1v1h-1zM290 498h1v1h-1zM291 521h1v1h-1zM292 526h1v1h-1zM292 535h1v1h-1zM293 537h1v1h-1zM294 497h1v1h-1zM294 539h1v1h-1zM294 541h1v1h-1zM295 541h1v1h-1zM296 498h1v1h-1zM297 541h1v1h-1zM298 498h1v1h-1zM298 542h1v1h-1zM299 485h1v1h-1zM300 498h1v1h-1zM301 539h1v1h-1zM301 540h1v1h-1zM301 545h1v1h-1zM302 499h1v1h-1zM304 498h1v1h-1zM304 500h1v1h-1zM305 498h1v1h-1zM305 540h1v1h-1zM306 498h1v1h-1zM307 496h1v1h-1zM311 543h1v1h-1zM313 498h1v1h-1zM314 498h1v1h-1zM314 541h1v1h-1zM314 542h1v1h-1zM314 545h1v1h-1zM318 537h1v1h-1zM318 574h1v1h-1zM320 538h1v1h-1zM321 540h1v1h-1zM323 534h1v1h-1zM326 499h1v1h-1zM328 540h1v1h-1zM328 541h1v1h-1zM329 499h1v1h-1zM329 544h1v1h-1zM332 499h1v1h-1zM332 541h1v1h-1zM333 498h1v1h-1zM333 499h1v1h-1zM335 542h1v1h-1zM337 498h1v1h-1zM337 538h1v1h-1zM337 544h1v1h-1zM339 498h1v1h-1zM340 427h1v1h-1zM341 536h1v1h-1zM341 539h1v1h-1zM341 540h1v1h-1zM343 539h1v1h-1zM343 542h1v1h-1zM344 540h1v1h-1zM347 541h1v1h-1zM347 545h1v1h-1zM348 501h1v1h-1zM348 541h1v1h-1zM348 542h1v1h-1zM349 542h1v1h-1zM350 497h1v1h-1zM350 499h1v1h-1zM351 541h1v1h-1zM353 499h1v1h-1zM354 495h1v1h-1zM354 497h1v1h-1zM354 500h1v1h-1zM355 497h1v1h-1zM355 542h1v1h-1zM355 544h1v1h-1zM355 559h1v1h-1zM356 500h1v1h-1zM356 540h1v1h-1zM357 467h1v1h-1zM357 496h1v1h-1zM358 465h1v1h-1zM358 541h1v1h-1zM361 542h1v1h-1zM363 538h1v1h-1zM364 544h1v1h-1zM366 496h1v1h-1zM366 542h1v1h-1zM367 537h1v1h-1zM367 541h1v1h-1zM369 541h1v1h-1zM370 498h1v1h-1zM370 499h1v1h-1zM370 540h1v1h-1zM370 541h1v1h-1zM372 538h1v1h-1zM372 539h1v1h-1zM372 540h1v1h-1zM373 500h1v1h-1zM374 500h1v1h-1zM374 543h1v1h-1zM376 503h1v1h-1zM376 539h1v1h-1zM376 541h1v1h-1zM377 546h1v1h-1zM377 574h1v1h-1zM378 496h1v1h-1zM378 497h1v1h-1zM378 503h1v1h-1zM379 542h1v1h-1zM380 498h1v1h-1zM380 541h1v1h-1zM381 498h1v1h-1zM382 499h1v1h-1zM382 542h1v1h-1zM383 539h1v1h-1zM383 543h1v1h-1zM384 500h1v1h-1zM384 583h1v1h-1zM385 538h1v1h-1zM385 540h1v1h-1zM385 573h1v1h-1zM387 542h1v1h-1zM387 543h1v1h-1zM388 540h1v1h-1zM388 542h1v1h-1zM390 499h1v1h-1zM390 535h1v1h-1zM390 541h1v1h-1zM391 543h1v1h-1zM393 498h1v1h-1zM393 540h1v1h-1zM393 542h1v1h-1zM394 468h1v1h-1zM394 539h1v1h-1zM395 541h1v1h-1zM395 544h1v1h-1zM397 538h1v1h-1zM398 541h1v1h-1zM398 544h1v1h-1zM403 498h1v1h-1zM403 542h1v1h-1zM403 545h1v1h-1zM407 537h1v1h-1zM409 492h1v1h-1zM409 529h1v1h-1zM410 537h1v1h-1zM410 541h1v1h-1zM411 566h1v1h-1zM412 540h1v1h-1zM412 542h1v1h-1zM412 565h1v1h-1zM413 498h1v1h-1zM414 536h1v1h-1zM415 539h1v1h-1zM415 543h1v1h-1zM416 499h1v1h-1zM416 541h1v1h-1zM417 497h1v1h-1zM418 498h1v1h-1zM418 541h1v1h-1zM419 498h1v1h-1zM420 498h1v1h-1zM424 544h1v1h-1zM425 540h1v1h-1zM426 496h1v1h-1zM427 497h1v1h-1zM428 498h1v1h-1zM428 542h1v1h-1zM431 542h1v1h-1zM436 536h1v1h-1zM438 500h1v1h-1zM440 540h1v1h-1zM441 539h1v1h-1zM442 540h1v1h-1zM443 498h1v1h-1zM445 536h1v1h-1zM446 499h1v1h-1zM448 500h1v1h-1zM449 542h1v1h-1zM450 499h1v1h-1zM451 543h1v1h-1zM454 497h1v1h-1zM459 499h1v1h-1zM459 543h1v1h-1zM461 501h1v1h-1zM464 546h1v1h-1zM465 481h1v1h-1zM465 537h1v1h-1zM466 540h1v1h-1zM468 540h1v1h-1zM468 544h1v1h-1zM470 544h1v1h-1zM474 499h1v1h-1zM477 542h1v1h-1z" fill="#ffff00"/>
<path d="M47.5 385.0 L48.3 354.8 L48.9 296.4 L49.5 265.7 L50.9 262.8 L53.5 244.4 L55.8 253.9 L58.2 255.4 L63.8 251.9 L65.7 253.9 L70.7 248.9 L74.7 252.9 L76.6 253.9 L79.6 248.9 L82.0 253.0 L90.0 250.5 L93.0 253.0 L99.0 251.0 L104.0 253.5 L111.5 249.0 L116.2 259.6 L118.6 246.6 L122.0 250.0 L125.7 247.0 L131.6 270.2 L136.0 266.0 L138.5 269.0 L140.5 265.5 L141.7 270.0 L145.3 248.5 L148.0 273.5 L151.7 280.2 L155.2 253.7 L160.0 247.0 L167.0 258.4 L169.4 245.4 L173.0 252.5 L181.3 247.0 L185.5 251.3 L189.5 249.5 L197.4 275.0 L202.4 252.5 L205.9 250.8 L209.5 245.4 L211.8 251.3 L216.6 289.2 L220.1 267.9 L225.6 247.0 L228.4 254.9 L232.7 246.1 L236.7 246.6 L239.8 256.0 L242.1 250.8 L246.2 274.5 L250.9 244.2 L254.4 248.9 L258.0 251.3 L265.1 253.2 L268.6 250.1 L271.0 253.7 L275.7 248.5 L278.6 257.2 L282.8 248.5 L285.7 256.0 L288.8 250.1 L291.1 253.2 L293.5 248.5 L299.4 251.3 L301.8 266.7 L304.1 265.0 L306.5 243.0 L311.2 258.4 L315.5 279.7 L320.7 280.9 L324.3 249.4 L329.7 265.5 L332.1 250.8 L336.1 252.5 L339.0 252.0 L342.0 253.7 L344.9 269.0 L349.1 253.2 L355.7 269.0 L361.2 256.0 L363.1 253.7 L365.0 262.0 L367.4 246.1 L369.7 245.4 L371.4 253.7 L374.5 248.5 L378.5 253.7 L382.5 293.4 L387.2 246.6 L390.3 250.8 L392.7 247.0 L394.3 259.6 L396.7 250.8 L401.4 262.0 L404.5 253.7 L408.5 246.1 L410.9 253.2 L412.8 250.8 L414.7 260.8 L418.7 290.4 L424.6 285.6 L426.5 258.9 L431.3 279.2 L436.5 253.7 L440.0 286.3 L443.6 286.3 L448.3 247.8 L450.2 244.7 L452.6 257.2 L454.2 249.4 L459.0 252.5 L461.5 249.5 L466.8 246.6 L469.0 251.0 L473.9 256.5 L477.9 256.0 L483.8 248.9 L487.4 246.1 L489.7 251.8 L493.3 248.5 L498.0 251.8 L503.9 254.1 L507.5 250.1" fill="none" stroke="#12b4f4" stroke-width="1" shape-rendering="crispEdges"/>
<g font-family="Liberation Sans, sans-serif" font-size="10.5" fill="#000">
<text x="42" y="173.6" text-anchor="end">3000</text><text x="42" y="245.6" text-anchor="end">2500</text><text x="42" y="318.6" text-anchor="end">2000</text><text x="42" y="391.6" text-anchor="end">1500</text><text x="42" y="463.6" text-anchor="end">1000</text><text x="42" y="536.6" text-anchor="end">500</text><text x="513" y="173.6">0.60</text><text x="513" y="245.6">0.50</text><text x="513" y="318.6">0.40</text><text x="513" y="391.6">0.30</text><text x="513" y="463.6">0.20</text><text x="513" y="536.6">0.10</text><text x="47.0" y="621" text-anchor="middle">0</text><text x="93.1" y="621" text-anchor="middle">200</text><text x="139.2" y="621" text-anchor="middle">400</text><text x="185.3" y="621" text-anchor="middle">600</text><text x="231.4" y="621" text-anchor="middle">800</text><text x="277.5" y="621" text-anchor="middle">1000</text><text x="323.6" y="621" text-anchor="middle">1200</text><text x="369.7" y="621" text-anchor="middle">1400</text><text x="415.8" y="621" text-anchor="middle">1600</text><text x="461.9" y="621" text-anchor="middle">1800</text><text x="507.5" y="621" text-anchor="middle">2000gB</text>
<text x="47" y="166.5">MB/s</text>
<text x="508" y="166.5" text-anchor="end">ms</text>
</g>
</svg>

  <!-- right panel -->
  <div class="abs" style="left:553px;top:149px;width:86px;height:24px;background:#fdfdfd;border:1px solid #0b66c5;border-radius:4px;box-sizing:border-box;"></div>
  <div class="abs" style="left:556px;top:152px;width:80px;height:18px;border:1px dotted #444;box-sizing:border-box;opacity:0.15;"></div>
  <div class="t" style="left:583px;top:155px;letter-spacing:0.0px;">Start</div>
  <div class="sep" style="top:186px;"></div>
  <svg width="14" height="14" style="left:549px;top:194px"><circle cx="6.5" cy="6.5" r="6.5" fill="#1a64c1"/><circle cx="6.5" cy="6.5" r="2.8" fill="#fff"/></svg>
  <div class="t" style="left:564.6px;top:195px;letter-spacing:-0.77px;">Read</div>
  <svg width="14" height="14" style="left:549px;top:213px"><circle cx="6.5" cy="6.5" r="6" fill="#f3f3f3" stroke="#555" stroke-width="1"/></svg>
  <div class="t" style="left:565.6px;top:214px;letter-spacing:0.1px;">Write</div>
  <div class="sep" style="top:231px;"></div>
  <div class="abs" style="left:549px;top:241px;width:13px;height:13px;border:1px solid #555;border-radius:3px;box-sizing:border-box;background:#f4f4f4;"></div>
  <div class="t" style="left:564.6px;top:242px;letter-spacing:-0.08px;">Short stroke</div>
  <div class="abs" style="left:549px;top:263px;width:72px;height:23px;border:1px solid #e2e2e2;background:#f7f7f7;box-sizing:border-box;"></div>
  <div class="t" style="left:552px;top:269px;color:#909090;">40</div>
  <div class="abs" style="left:603px;top:263px;width:18px;height:23px;border:1px dotted #b4b4b4;box-sizing:border-box;background:#f3f3f3;"></div>
  <div class="abs" style="left:605px;top:265px;width:14px;height:9px;border:1px solid #dcdcdc;box-sizing:border-box;background:#f6f6f6;"></div>
  <div class="abs" style="left:605px;top:275px;width:14px;height:9px;border:1px solid #dcdcdc;box-sizing:border-box;background:#f6f6f6;"></div>
  <svg width="10" height="20" style="left:607px;top:266px"><path d="M1.5 5.5 L5 2 L8.5 5.5 Z M1.5 12 L5 15.5 L8.5 12 Z" fill="#a0a0a0"/></svg>
  <div class="t" style="left:634.3px;top:269px;letter-spacing:0.9px;">gB</div>
  <div class="chk" style="top:298px;"></div>
  <svg width="13" height="13" style="left:549px;top:298px"><path d="M3 6.5 L5.5 9 L10 4" fill="none" stroke="#fff" stroke-width="1.1"/></svg>
  <div class="t" style="left:565.6px;top:299px;letter-spacing:-0.4px;">Transfer rate</div>
  <div class="sep" style="top:313px;"></div>
  <div class="t" style="left:548.5px;top:320px;letter-spacing:0.38px;">Minimum</div>
  <div class="abs" style="left:598px;top:318px;width:6px;height:14px;background:#f9f9f9;"></div>
  <div class="lcd" style="top:334px;color:#18b4f8;">1524.6 MB/s</div>
  <div class="t" style="left:548.7px;top:358px;letter-spacing:0.38px;">Maximum</div>
  <div class="lcd" style="top:371px;color:#18b4f8;">2499.8 MB/s</div>
  <div class="t" style="left:549.5px;top:393px;letter-spacing:-0.25px;">Average</div>
  <div class="lcd" style="top:407px;color:#18b4f8;">2399.1 MB/s</div>
  <div class="sep" style="top:433px;"></div>
  <div class="chk" style="top:442px;"></div>
  <svg width="13" height="13" style="left:549px;top:442px"><path d="M3 6.5 L5.5 9 L10 4" fill="none" stroke="#fff" stroke-width="1.1"/></svg>
  <div class="t" style="left:565.4px;top:444px;letter-spacing:-0.26px;">Access time</div>
  <div class="lcd" style="top:458px;color:#ffff00;">0.114 ms</div>
  <div class="chk" style="top:481px;"></div>
  <svg width="13" height="13" style="left:549px;top:481px"><path d="M3 6.5 L5.5 9 L10 4" fill="none" stroke="#fff" stroke-width="1.1"/></svg>
  <div class="t" style="left:564.7px;top:483px;letter-spacing:-0.13px;">Burst rate</div>
  <div class="lcd" style="top:497px;color:#fff;">2816.0 MB/s</div>
  <div class="t" style="left:548.5px;top:521px;letter-spacing:-0.56px;">CPU usage</div>
  <div class="lcd" style="top:535px;color:#fff;">2.0%</div>

  <div class="t" style="left:548.5px;top:571px;letter-spacing:-0.17px;">Number of passes</div>
  <div class="abs" style="left:549px;top:585px;width:91px;height:23px;background:#fff;border:1px solid #e4e4e4;border-bottom-color:#8a8a8a;box-sizing:border-box;"></div>
  <div class="t" style="left:553px;top:591px;">1</div>
  <div class="abs" style="left:622px;top:585px;width:18px;height:23px;border:1px dotted #a8a8a8;box-sizing:border-box;background:#f6f6f6;"></div>
  <div class="abs" style="left:624px;top:587px;width:14px;height:9px;border:1px solid #d0d0d0;box-sizing:border-box;background:#fafafa;"></div>
  <div class="abs" style="left:624px;top:597px;width:14px;height:9px;border:1px solid #d0d0d0;box-sizing:border-box;background:#fafafa;"></div>
  <svg width="10" height="20" style="left:626px;top:588px"><path d="M1.5 5.5 L5 2 L8.5 5.5 Z M1.5 12 L5 15.5 L8.5 12 Z" fill="#111"/></svg>
  <div class="abs" style="left:549px;top:617px;width:63px;height:15px;background:#0e7a10;border:1px solid #b8b8b8;box-sizing:border-box;"></div>
  <div class="t" style="left:616.8px;top:620px;letter-spacing:0.25px;">1/1</div>
  <div class="abs" style="left:0;top:0;width:675px;height:656px;box-sizing:border-box;border:1px solid #7e8b96;border-right:0;border-bottom-color:#9aa3ab;border-radius:8px;"></div>
</div>
<!-- desktop strips -->
<div class="abs" style="left:0;top:0;width:8px;height:8px;background:#b9cde0;z-index:-1;"></div>
<div class="abs" style="left:668px;top:0;width:8px;height:8px;background:#b9cde0;z-index:-1;"></div>
<div class="abs" style="left:675px;top:0;width:1px;height:657px;background:linear-gradient(#9aa8b6,#9aa8b6 2%,#4a7ac8 8%,#2d4b9c 30%,#2d4b9c);"></div>
<div class="abs" style="left:0;top:656px;width:676px;height:1px;background:linear-gradient(90deg,#6f7d88,#6f7d88 7%,#3a4a78 10%,#2d4b9c 30%,#2d4b9c);"></div>
<div class="abs" style="left:0;top:648px;width:8px;height:9px;background:#6f7d88;z-index:-1;"></div>
</body></html>
